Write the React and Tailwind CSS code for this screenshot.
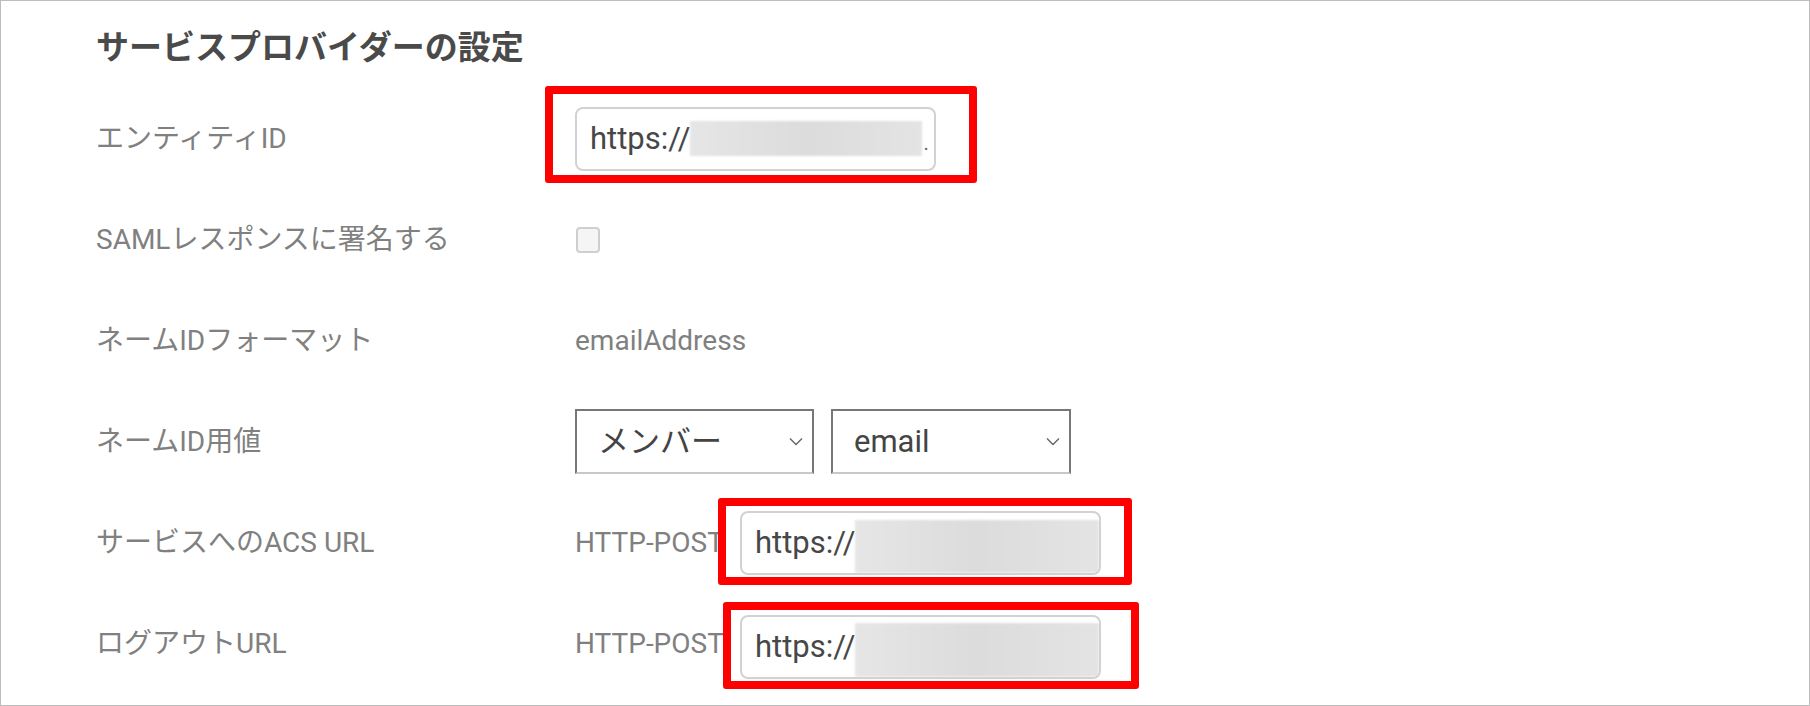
import React from 'react';

// Fonts: Roboto for latin, Noto Sans CJK JP for the kana/kanji
const FONT = "font-[family-name:Roboto,'Noto_Sans_CJK_JP',sans-serif]";

// Red annotation frame drawn over a field
const Marked = ({ children, frame }) => (
  <div className="relative">
    {children}
    <div className={`pointer-events-none absolute rounded-[3px] border-[8px] border-[#ff0000] ${frame}`} />
  </div>
);

// Masked URL input: "https://" then a blurred-out block
const UrlField = ({ blur, dot = false }) => (
  <div className="flex h-[64px] w-[361px] items-center overflow-hidden rounded-[8px] border-2 border-[#d2d2d2] bg-white pl-[13px]">
    <span className="text-[31px] leading-none text-[#474747]">https://</span>
    <div className={`bg-gradient-to-r from-[#e6e6e6] via-[#dcdcdc] to-[#e4e4e4] blur-[1px] ${blur}`} />
    {dot && <span className="ml-[1px] self-end pb-[16px] text-[20px] leading-none text-[#666]">.</span>}
  </div>
);

const Chevron = () => (
  <svg width="14" height="9" viewBox="0 0 14 9" fill="none" className="shrink-0">
    <path d="M1 1.5 L7 7.5 L13 1.5" stroke="#666" strokeWidth="1.4" />
  </svg>
);

const Select = ({ value, width }) => (
  <div
    className={`flex h-[65px] items-center justify-between border-2 border-[#777] border-b-[#c8c8c8] bg-white pl-[21px] pr-[9px] ${width}`}
  >
    <span className="text-[31px] leading-none text-[#444]">{value}</span>
    <Chevron />
  </div>
);

const Row = ({ label, children }) => (
  <div className="grid h-[101px] grid-cols-[479px_1fr] items-center">
    <div className="text-[28px] leading-none text-[#808080]">{label}</div>
    <div className="flex items-center">{children}</div>
  </div>
);

export default function App() {
  return (
    <div className={`h-[706px] w-full border border-[#bdbdbd] bg-white pl-[95px] ${FONT}`}>
      <div className="flex h-[87px] items-center pt-[6px]">
        <h2 className="text-[33px] font-bold leading-none text-[#4a4a4a]">サービスプロバイダーの設定</h2>
      </div>

      <Row label="エンティティID">
        <Marked frame="-left-[30px] -right-[41px] -top-[21px] -bottom-[12px]">
          <UrlField blur="h-[35px] w-[232px]" dot />
        </Marked>
      </Row>

      <Row label="SAMLレスポンスに署名する">
        <div className="ml-[1px] h-[26px] w-[24px] rounded-[4px] border-2 border-[#cfcfcf] bg-[#f5f5f5]" />
      </Row>

      <Row label="ネームIDフォーマット">
        <span className="text-[28px] leading-none text-[#808080]">emailAddress</span>
      </Row>

      <Row label="ネームID用値">
        <div className="flex gap-[17px]">
          <Select value="メンバー" width="w-[239px]" />
          <Select value="email" width="w-[240px]" />
        </div>
      </Row>

      <Row label="サービスへのACS URL">
        <span className="w-[165px] shrink-0 text-[28px] leading-none text-[#808080]">HTTP-POST</span>
        <Marked frame="-left-[22px] -right-[31px] -top-[13px] -bottom-[10px]">
          <UrlField blur="h-[53px] flex-1 self-end" />
        </Marked>
      </Row>

      <Row label="ログアウトURL">
        <span className="w-[165px] shrink-0 text-[28px] leading-none text-[#808080]">HTTP-POST</span>
        <div className="mt-[6px]">
          <Marked frame="-left-[17px] -right-[38px] -top-[13px] -bottom-[10px]">
            <UrlField blur="h-[54px] flex-1 self-end" />
          </Marked>
        </div>
      </Row>
    </div>
  );
}
